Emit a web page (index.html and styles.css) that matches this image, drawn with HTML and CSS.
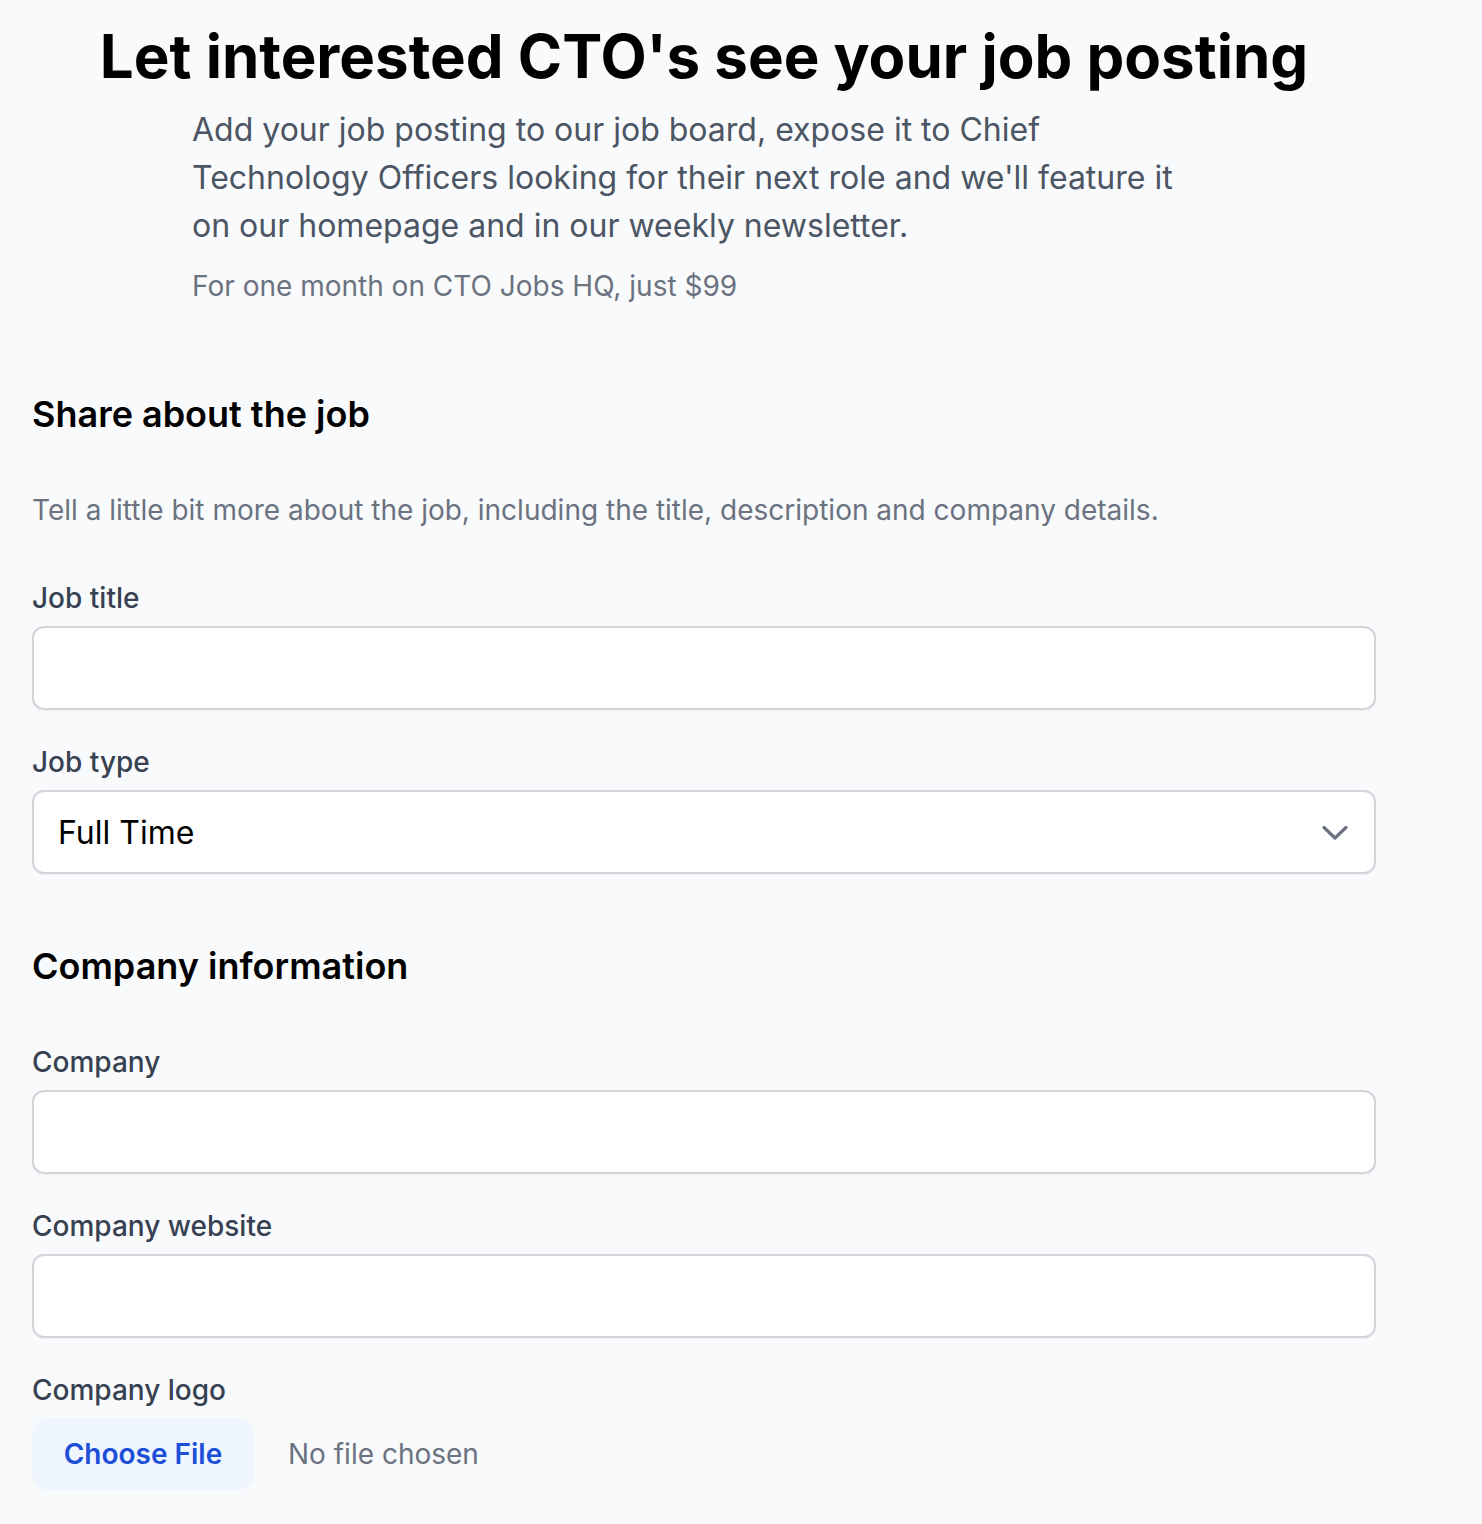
FILE: index.html
```html
<!DOCTYPE html>
<html lang="en">
<head>
<meta charset="utf-8">
<title>Post a job</title>
<link rel="stylesheet" href="styles.css">
</head>
<body>
<main class="page">
  <header class="hero">
    <h1 class="hero-title">Let interested CTO's see your job posting</h1>
    <div class="hero-body">
      <p class="hero-lead">Add your job posting to our job board, expose it to Chief Technology Officers looking for their next role and we'll feature it on our homepage and in our weekly newsletter.</p>
      <p class="hero-price">For one month on CTO Jobs HQ, just $99</p>
    </div>
  </header>

  <form class="form">
    <section class="section">
      <h2 class="section-title">Share about the job</h2>
      <p class="section-desc">Tell a little bit more about the job, including the title, description and company details.</p>
      <div class="field">
        <label class="label" for="title">Job title</label>
        <input class="input" id="title" type="text">
      </div>
      <div class="field">
        <label class="label" for="type">Job type</label>
        <div class="select-wrap">
          <select class="select" id="type">
            <option>Full Time</option>
            <option>Part Time</option>
            <option>Contract</option>
          </select>
          <svg class="chevron" width="26" height="16" viewBox="0 0 26 16" fill="none"><path d="M2 2.5 L13 13 L24 2.5" stroke="#6b7280" stroke-width="3.2" stroke-linecap="round" stroke-linejoin="round"/></svg>
        </div>
      </div>
    </section>

    <section class="section section-company">
      <h2 class="section-title">Company information</h2>
      <div class="field field-first">
        <label class="label" for="company">Company</label>
        <input class="input" id="company" type="text">
      </div>
      <div class="field">
        <label class="label" for="website">Company website</label>
        <input class="input" id="website" type="text">
      </div>
      <div class="field">
        <label class="label">Company logo</label>
        <div class="file-row">
          <span class="file-btn">Choose File</span>
          <span class="file-name">No file chosen</span>
        </div>
      </div>
    </section>
  </form>
</main>
</body>
</html>
```

FILE: styles.css
```css
* { box-sizing: border-box; }
html, body {
  margin: 0;
  padding: 0;
  background: #f9fafb;
}
body {
  font-family: Inter, "Noto Sans", sans-serif;
  color: #111827;
}
.page {
  width: 1344px;
  margin-left: 32px;
  padding-top: 20px;
}
.hero-title {
  margin: 0;
  text-align: center;
  font-size: 60px;
  line-height: 72px;
  font-weight: 700;
  color: #000;
}
.hero-body {
  width: 1024px;
  margin: 14px auto 0;
}
.hero-lead {
  margin: 0;
  font-size: 32px;
  line-height: 48px;
  color: #4b5563;
}
.hero-price {
  margin: 16px 0 0;
  font-size: 28px;
  line-height: 40px;
  color: #6b7280;
}
.form { margin-top: 80px; }
.section-title {
  margin: 0;
  font-size: 36px;
  line-height: 56px;
  font-weight: 600;
  color: #000;
}
.section-desc {
  margin: 48px 0 0;
  font-size: 28px;
  line-height: 40px;
  color: #6b7280;
}
.field { margin-top: 32px; }
.section .section-desc + .field { margin-top: 48px; }
.field-first { margin-top: 48px; }
.section-company { margin-top: 64px; }
.label {
  display: block;
  font-size: 28px;
  line-height: 40px;
  font-weight: 500;
  color: #374151;
}
.input, .select {
  display: block;
  width: 100%;
  height: 84px;
  margin-top: 8px;
  border: 2px solid #d1d5db;
  border-radius: 12px;
  background: #fff;
  font-family: Inter, "Noto Sans", sans-serif;
  font-size: 32px;
  color: #000;
  padding: 0 24px;
  box-shadow: 0 1px 2px rgba(0,0,0,0.05);
}
.select-wrap { position: relative; }
.select {
  appearance: none;
  -webkit-appearance: none;
  outline: none;
}
.chevron {
  position: absolute;
  right: 28px;
  top: 35px;
  pointer-events: none;
}
.file-row {
  display: flex;
  align-items: center;
  gap: 34px;
  margin-top: 8px;
}
.file-btn {
  display: inline-flex;
  align-items: center;
  justify-content: center;
  width: 222px;
  height: 72px;
  border-radius: 16px;
  background: #eff6ff;
  color: #1d4ed8;
  font-size: 28px;
  font-weight: 600;
}
.file-name {
  font-size: 28px;
  color: #6b7280;
}
```
